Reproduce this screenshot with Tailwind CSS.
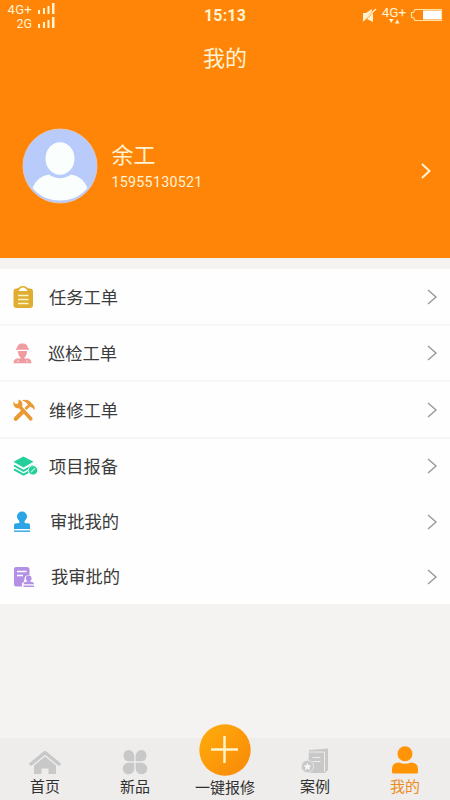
<!DOCTYPE html>
<html lang="zh-CN">
<head>
<meta charset="utf-8">
<meta name="viewport" content="width=device-width, initial-scale=1">
<title>我的</title>
<script src="https://cdn.jsdelivr.net/npm/@tailwindcss/browser@4"></script>
</head>
<body class="bg-[#f4f3f2]">
<div class="w-[450px] h-[800px] flex flex-col overflow-hidden font-[Roboto,'Noto_Sans_CJK_SC',sans-serif] text-[#3b3b3b]">
  <header class="h-[258px] shrink-0 bg-[#ff8509] text-[#fff3d2] flex flex-col">
    <!-- Status bar -->
    <div class="h-8 shrink-0 grid grid-cols-3 items-start">
      <div class="w-[55px] pt-[3px] flex flex-col items-end text-[13px] leading-[14px]">
        <div class="flex gap-[5px]"><span class="tracking-[0.3px]">4G+</span>
          <svg class="w-[18px] h-[13px]" viewBox="0 0 18 13" fill="currentColor"><path d="M1 7h2v4H1zM6 5h2v6H6zM10.500 3h2v8h-2zM15 0h2.500v11H15z"/></svg>
        </div>
        <div class="flex gap-[5px]"><span class="text-[12.500px]">2G</span>
          <svg class="w-[18px] h-[13px]" viewBox="0 0 18 13" fill="currentColor"><path d="M1 7h2v4H1zM6 5h2v6H6zM10.500 3h2v8h-2zM15 0h2.500v11H15z"/></svg>
        </div>
      </div>
      <div class="pt-[6px] text-center text-[16px] leading-5 font-bold tracking-[0.2px]">15:13</div>
      <div class="pt-[6px] pr-[7px] flex justify-end items-start">
        <svg class="w-[15px] h-[16px] mr-[4px] mt-[2px]" viewBox="0 0 15 16" fill="currentColor"><path d="M1 5h3l6-4v2L2 12H1zM5 11l6-6v9z"/><path d="M1 13 14 1" stroke="currentColor" stroke-width="1.200"/></svg>
        <div class="w-[26px] flex flex-col items-center mr-[3px]">
          <span class="text-[13.500px] leading-[13px]">4G+</span>
          <svg class="w-[11px] h-[5px]" viewBox="0 0 11 5" fill="currentColor"><path d="M0 0h4.500L2.250 4zM6 4.500h4.500L8.250 .5z"/></svg>
        </div>
        <svg class="w-[33px] h-[14px] mt-[2px]" viewBox="0 0 33 14"><path d="M5 1.500h26.500v11H5l-1.500-3H1.500v-5h2z" fill="none" stroke="#ffe2a0" stroke-width="1.200"/><path d="M13 2.500h18v9H13z" fill="#fff"/></svg>
      </div>
    </div>
    <h1 class="h-[52px] shrink-0 text-center text-[22px] leading-[54px]">我的</h1>
    <!-- Profile -->
    <div class="mt-[44px] h-[76px] pl-[22px] pr-[18px] flex items-center">
      <svg class="w-[76px] h-[76px] shrink-0" viewBox="0 0 76 76">
        <circle cx="38" cy="38" r="37" fill="#b8cbfa" stroke="#d9c9c8" stroke-width="1"/>
        <ellipse cx="38" cy="30.500" rx="14.500" ry="16.300" fill="#fafffd"/>
        <path d="M10.500 60Q15 48.500 27 46.500Q38 54 49 46.500Q61 48.500 65.500 60Q55 72.500 38 72.500T10.500 60z" fill="#fafffd"/>
      </svg>
      <div class="ml-[13.500px] flex-1">
        <div class="text-[22px] leading-[30px] pt-[1px]">余工</div>
        <div class="text-[14.300px] leading-5 tracking-[0.240px] mt-px">15955130521</div>
      </div>
      <svg class="w-[12px] h-[18px] mt-[10px]" viewBox="0 0 12 18" fill="none" stroke="#fff3d2" stroke-width="2"><path d="m2 2 7.500 7L2 16"/></svg>
    </div>
  </header>

  <main class="mt-[11px] shrink-0 bg-[#fefefe]">
    <a class="h-[57px] pl-3 pr-[11px] flex items-center border-b-2 border-[#f7f6f6]">
      <svg class="w-[26px] h-[24px]" viewBox="0 0 26 24"><rect x="1.500" y="3.500" width="19.500" height="19.500" rx="3" fill="#dfae31"/><path d="M5 3.500C7 3.500 7 1 11 1s4 2.500 6 2.500l-2.500 4h-7z" fill="#dfae31"/><path d="M6.500 6Q8 2.500 11 2.500T15.500 6z" fill="#fff"/><path d="M6 10.500h10.500M6 14.500h10.500M6 18.500h10.500" stroke="#fff4c9" stroke-width="1.400"/></svg>
      <span class="ml-[11px] pt-1 flex-1 text-[17.300px]">任务工单</span>
      <svg class="w-[14px] h-[18px]" viewBox="0 0 14 18" fill="none" stroke="#999" stroke-width="1.400"><path d="m3 2 8 7-8 7"/></svg>
    </a>
    <a class="h-[56px] pl-3 pr-[11px] flex items-center border-b-2 border-[#f7f6f6]">
      <svg class="w-[26px] h-[24px]" viewBox="0 0 26 24" fill="#ee9c9f"><path d="M5 8C5 4.500 7 2.500 10.500 2.500S16 4.500 16 8zM4 7.300h13v1.500H4zM6 10h9c0 3-.8 5-2.500 6.200v1.300h3.500q3.500.5 3.500 4.800H1.500q0-4.300 3.500-4.800h3.500v-1.300C6.800 15 6 13 6 10z"/><path d="M6 19.500v1.500M15 19.500v1.500" stroke="#fff" stroke-width="1"/></svg>
      <span class="ml-[10px] pt-1 flex-1 text-[17.300px]">巡检工单</span>
      <svg class="w-[14px] h-[18px]" viewBox="0 0 14 18" fill="none" stroke="#999" stroke-width="1.400"><path d="m3 2 8 7-8 7"/></svg>
    </a>
    <a class="h-[57px] pl-3 pr-[11px] flex items-center border-b-2 border-[#f7f6f6]">
      <svg class="w-[26px] h-[24px]" viewBox="0 0 26 24" fill="#e99a35"><path d="M6.500 1.500 6.200 5.500 3.500 6 1.500 3.500C.5 8 4 11 7 10.300L17.500 22.300c1.500 1.500 4-.8 2.800-2.600L10 8.500C11.500 5.500 9.500 2.500 6.500 1.500z"/><path d="M10 2.500c4-1.500 7-.5 9 2l2.500 2.500c1 1 1.500 3 1 5L20.500 10 18 8.500 14.500 12 12.500 10 16 6.500Q14 3.500 10 2.500zM9.500 12l3 3-7.500 7.500q-1.500 1-2.800-.3T2.500 19z"/></svg>
      <span class="ml-[11px] pt-1 flex-1 text-[17.300px]">维修工单</span>
      <svg class="w-[14px] h-[18px]" viewBox="0 0 14 18" fill="none" stroke="#999" stroke-width="1.400"><path d="m3 2 8 7-8 7"/></svg>
    </a>
    <a class="h-[55px] pl-3 pr-[11px] pb-px flex items-center">
      <svg class="w-[26px] h-[24px]" viewBox="0 0 26 24"><path d="M11.500 2.500 21.500 7.800 11.500 13.500 1.500 7.800z" fill="#23cf9b"/><path d="m2 11.500 9.500 5.300L21 11.500M2 15.300l9.500 5.300 7-3.800" fill="none" stroke="#23cf9b" stroke-width="2"/><circle cx="21" cy="16.300" r="4.700" fill="#23cf9b" stroke="#fefefe" stroke-width=".8"/><path d="m19 18.300 4-4" stroke="#a8f5d9" stroke-width="1.300"/></svg>
      <span class="ml-[11px] pt-1 flex-1 text-[17.300px]">项目报备</span>
      <svg class="w-[14px] h-[18px]" viewBox="0 0 14 18" fill="none" stroke="#999" stroke-width="1.400"><path d="m3 2 8 7-8 7"/></svg>
    </a>
    <a class="h-[55px] pl-3 pr-[11px] flex items-center">
      <svg class="w-[26px] h-[24px]" viewBox="0 0 26 24" fill="#2ba5e5"><path d="M7.500 12c0-2-2.500-2.500-2.500-5.500a5 5 0 0 1 10 0c0 3-2.500 3.500-2.500 5.500 0 1 .8 1.200 2 1.200H16q2 0 2 2V19H2v-3.800q0-2 2-2h1.500c1.200 0 2-.2 2-1.200z"/><path d="M2 20.500h16v1.400H2z"/></svg>
      <span class="ml-[12px] pt-[3px] flex-1 text-[17.300px]">审批我的</span>
      <svg class="w-[14px] h-[18px]" viewBox="0 0 14 18" fill="none" stroke="#999" stroke-width="1.400"><path d="m3 2 8 7-8 7"/></svg>
    </a>
    <a class="h-[55px] pl-3 pr-[11px] flex items-center">
      <svg class="w-[26px] h-[24px]" viewBox="0 0 26 24" fill="#b48fe6"><path d="M4 2h11q2.500 0 2.500 2.500V10q-5 0-5 4 0 3-2.500 4v3.500H4Q2 21.500 2 19.500V4q0-2 2-2z"/><path d="M5 6.500h9.500M5 10.500h6" stroke="#fff" stroke-width="1.500"/><path d="M15.500 16.500c0-1-1.700-1-1.700-3a2.900 2.900 0 0 1 5.800 0c0 2-1.600 2-1.600 3l2.500.5q1.500.3 1.500 2.300H11.500q0-2 1.500-2.300zM11.500 20.500H22V22H11.500z"/></svg>
      <span class="ml-[13px] pt-[3px] flex-1 text-[17.300px]">我审批的</span>
      <svg class="w-[14px] h-[18px]" viewBox="0 0 14 18" fill="none" stroke="#999" stroke-width="1.400"><path d="m3 2 8 7-8 7"/></svg>
    </a>
  </main>

  <!-- Tab bar -->
  <nav class="mt-auto h-[62px] shrink-0 bg-[#eeedec] grid grid-cols-5 grid-rows-1 text-[15px] leading-5 text-[#303030]">
    <a class="min-h-0 flex flex-col items-center justify-end pb-[3px]">
      <svg class="w-8 h-[27px] mb-[1px]" viewBox="0 0 32 27" fill="#c8c8c8"><path d="M2 15 16 3.500 30 15" fill="none" stroke="#c8c8c8" stroke-width="3.500" stroke-linecap="round" stroke-linejoin="round"/><path d="m16 7.500 11 9V25h-7.500v-5.500h-7V25H5v-8.500z"/></svg>
      <span>首页</span>
    </a>
    <a class="min-h-0 flex flex-col items-center justify-end pb-[3px]">
      <svg class="w-[26px] h-[26px] mb-[2px]" viewBox="0 0 26 26" fill="#c8c8c8"><path d="M6.500 1a5.800 5.800 0 0 1 5.800 5.800v5.500H6.500A5.700 5.700 0 0 1 6.500 1zM19.500 1a5.700 5.700 0 0 1 0 11.300h-5.800V6.800A5.800 5.800 0 0 1 19.500 1zM6.500 13.700h5.800v5.600a5.800 5.800 0 1 1-5.800-5.600zM13.700 13.700h5.800a5.800 5.800 0 1 1-5.800 5.600z"/></svg>
      <span>新品</span>
    </a>
    <a class="min-h-0 flex flex-col items-center justify-end pb-[2px]">
      <svg class="w-[52px] h-[52px] shrink-0 mb-[2px]" viewBox="0 0 52 52"><defs><linearGradient id="plus" x1="0" y1="0" x2="1" y2="1"><stop stop-color="#ffad0d"/><stop offset="1" stop-color="#f98807"/></linearGradient></defs><circle cx="26" cy="26" r="25.700" fill="url(#plus)"/><path d="M12 25.500h27M25.500 12v27" stroke="#fff3c9" stroke-width="2.500"/></svg>
      <span>一键报修</span>
    </a>
    <a class="min-h-0 flex flex-col items-center justify-end pb-[3px]">
      <svg class="w-[28px] h-[26px] mb-[3px]" viewBox="0 0 28 26" fill="#c8c8c8"><path d="M8 2 27 .5V22l-3 3H7z"/><path d="M8.500 4H23.500v20M11.500 9.500h8M11.500 13.500h8" fill="none" stroke="#eeedec" stroke-width="1"/><circle cx="6.500" cy="18.500" r="6.200" stroke="#eeedec" stroke-width=".8"/><path d="m6.500 14.500 1.200 2.700 2.800.3-2.100 1.900.6 2.800-2.500-1.500L4 22.200l.6-2.800-2.100-1.900 2.800-.3z" fill="#f6f6f6"/></svg>
      <span>案例</span>
    </a>
    <a class="min-h-0 flex flex-col items-center justify-end pb-[3px] text-[#ee8b1c]">
      <svg class="w-[28px] h-[28px] mb-[3px]" viewBox="0 0 28 28" fill="#ff9406"><circle cx="14" cy="7.800" r="7.500"/><path d="M1 26v-3q0-6.500 7-6.500 6 2.500 12 0 7 0 7 6.500v3q0 1.500-1.500 1.500h-23Q1 27.500 1 26z"/></svg>
      <span>我的</span>
    </a>
  </nav>
</div>
</body>
</html>
